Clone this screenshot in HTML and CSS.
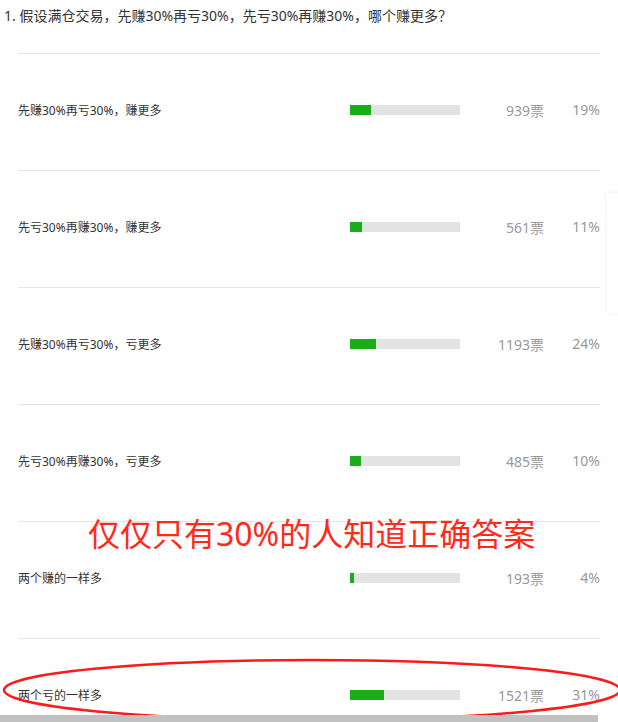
FILE: index.html
```html
<!DOCTYPE html>
<html>
<head>
  <meta charset="utf-8">
  <title>投票结果</title>
  <link rel="stylesheet" href="styles.css">
</head>
<body>
  <div class="page">
    <div class="question">1. 假设满仓交易，先赚30%再亏30%，先亏30%再赚30%，哪个赚更多？</div>

    <ul class="options">
      <li class="option">
        <span class="label">先赚30%再亏30%，赚更多</span>
        <span class="bar"><span class="fill" style="width: 19%"></span></span>
        <span class="votes">939票</span>
        <span class="percent">19%</span>
      </li>
      <li class="option">
        <span class="label">先亏30%再赚30%，赚更多</span>
        <span class="bar"><span class="fill" style="width: 11%"></span></span>
        <span class="votes">561票</span>
        <span class="percent">11%</span>
      </li>
      <li class="option">
        <span class="label">先赚30%再亏30%，亏更多</span>
        <span class="bar"><span class="fill" style="width: 24%"></span></span>
        <span class="votes">1193票</span>
        <span class="percent">24%</span>
      </li>
      <li class="option">
        <span class="label">先亏30%再赚30%，亏更多</span>
        <span class="bar"><span class="fill" style="width: 10%"></span></span>
        <span class="votes">485票</span>
        <span class="percent">10%</span>
      </li>
      <li class="option">
        <span class="label">两个赚的一样多</span>
        <span class="bar"><span class="fill" style="width: 4%"></span></span>
        <span class="votes">193票</span>
        <span class="percent">4%</span>
      </li>
      <li class="option">
        <span class="label">两个亏的一样多</span>
        <span class="bar"><span class="fill" style="width: 31%"></span></span>
        <span class="votes">1521票</span>
        <span class="percent">31%</span>
      </li>
    </ul>

    <!-- annotation overlays -->
    <div class="note">仅仅只有30%的人知道正确答案</div>
    <svg class="circle" width="618" height="722" viewBox="0 0 618 722">
      <ellipse cx="312" cy="690" rx="308" ry="30" fill="none" stroke="#ff1a1a" stroke-width="2.5"/>
    </svg>

    <div class="side-panel"></div>
    <div class="scrollbar"></div>
  </div>
</body>
</html>
```

FILE: styles.css
```css
body {
  margin: 0;
  background: #fff;
  font-family: "Noto Sans", "Noto Sans CJK SC", sans-serif;
  color: #333;
}

.page {
  position: relative;
  width: 618px;
  height: 722px;
  overflow: hidden;
}

.question {
  padding: 6px 4px 0;
  height: 47px;
  font-size: 14px;
  line-height: 19px;
}

.options {
  list-style: none;
  margin: 0 0 0 18px;
  padding: 0;
  width: 582px;
}

.option {
  display: flex;
  align-items: center;
  height: 111px;
  padding-bottom: 5px;
  border-top: 1px solid #e5e5e5;
}

.label {
  width: 332px;
  font-size: 12px;
}

.bar {
  width: 110px;
  height: 10px;
  background: #e3e3e3;
}

.fill {
  display: block;
  height: 100%;
  background: #1aad19;
}

.votes, .percent {
  text-align: right;
  font-size: 14px;
  color: #999;
}

.votes {
  width: 84px;
}

.percent {
  width: 56px;
}

.note {
  position: absolute;
  left: 88px;
  top: 512px;
  font-size: 32px;
  line-height: 44px;
  color: #ff2a1a;
  white-space: nowrap;
}

.circle {
  position: absolute;
  left: 0;
  top: 0;
  pointer-events: none;
}

.side-panel {
  position: absolute;
  left: 607px;
  top: 193px;
  width: 40px;
  height: 120px;
  background: #fff;
  box-shadow: 0 0 6px rgba(0, 0, 0, 0.06);
}

.scrollbar {
  position: absolute;
  left: 0;
  bottom: 0;
  width: 598px;
  height: 7px;
  background: #c1c1c1;
}
```
